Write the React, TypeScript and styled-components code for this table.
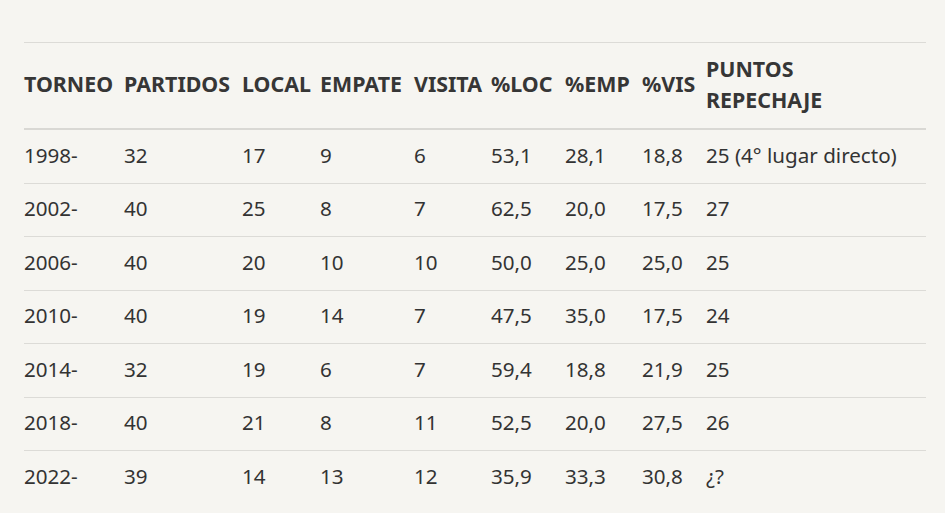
import React from "react";
import styled, { createGlobalStyle } from "styled-components";

const GlobalStyle = createGlobalStyle`
  html, body {
    margin: 0;
    padding: 0;
    background: #f6f5f1;
  }
  body {
    font-family: "Noto Sans", "Source Sans Pro", Arial, sans-serif;
    color: #333333;
  }
`;

const Page = styled.div`
  width: 945px;
  height: 513px;
  overflow: hidden;
  box-sizing: border-box;
  padding: 42px 19px 0 24px;
  background: #f6f5f1;
`;

const Table = styled.table`
  width: 902px;
  border-collapse: collapse;
  table-layout: fixed;
  border-top: 1px solid #dcdbd7;
  font-size: 20.6px;
  line-height: 30.5px;
`;

const Col = styled.col<{ $w: number }>`
  width: ${(p) => p.$w}px;
`;

const HeadCell = styled.th`
  text-align: left;
  vertical-align: middle;
  font-weight: 700;
  font-size: 21.4px;
  color: #363636;
  padding: 11px 0 13px;
  white-space: nowrap;
  border-bottom: 2px solid #d9d8d4;
`;

const Row = styled.tr`
  border-bottom: 1px solid #dcdbd7;
  &:last-child {
    border-bottom: none;
  }
`;

const Cell = styled.td`
  padding: 9.5px 0 12.5px;
  vertical-align: middle;
  color: #333333;
  white-space: nowrap;
`;

const widths = [100, 118, 78, 94, 77, 74, 77, 64, 220];

const headers: React.ReactNode[] = [
  "TORNEO",
  "PARTIDOS",
  "LOCAL",
  "EMPATE",
  "VISITA",
  "%LOC",
  "%EMP",
  "%VIS",
  <>
    PUNTOS
    <br />
    REPECHAJE
  </>,
];

const rows: string[][] = [
  ["1998-", "32", "17", "9", "6", "53,1", "28,1", "18,8", "25 (4° lugar directo)"],
  ["2002-", "40", "25", "8", "7", "62,5", "20,0", "17,5", "27"],
  ["2006-", "40", "20", "10", "10", "50,0", "25,0", "25,0", "25"],
  ["2010-", "40", "19", "14", "7", "47,5", "35,0", "17,5", "24"],
  ["2014-", "32", "19", "6", "7", "59,4", "18,8", "21,9", "25"],
  ["2018-", "40", "21", "8", "11", "52,5", "20,0", "27,5", "26"],
  ["2022-", "39", "14", "13", "12", "35,9", "33,3", "30,8", "¿?"],
];

export default function App() {
  return (
    <>
      <GlobalStyle />
      <Page>
        <Table>
          <colgroup>
            {widths.map((w, i) => (
              <Col key={i} $w={w} />
            ))}
          </colgroup>
          <thead>
            <tr>
              {headers.map((h, i) => (
                <HeadCell key={i}>{h}</HeadCell>
              ))}
            </tr>
          </thead>
          <tbody>
            {rows.map((r, i) => (
              <Row key={i}>
                {r.map((c, j) => (
                  <Cell key={j}>{c}</Cell>
                ))}
              </Row>
            ))}
          </tbody>
        </Table>
      </Page>
    </>
  );
}
